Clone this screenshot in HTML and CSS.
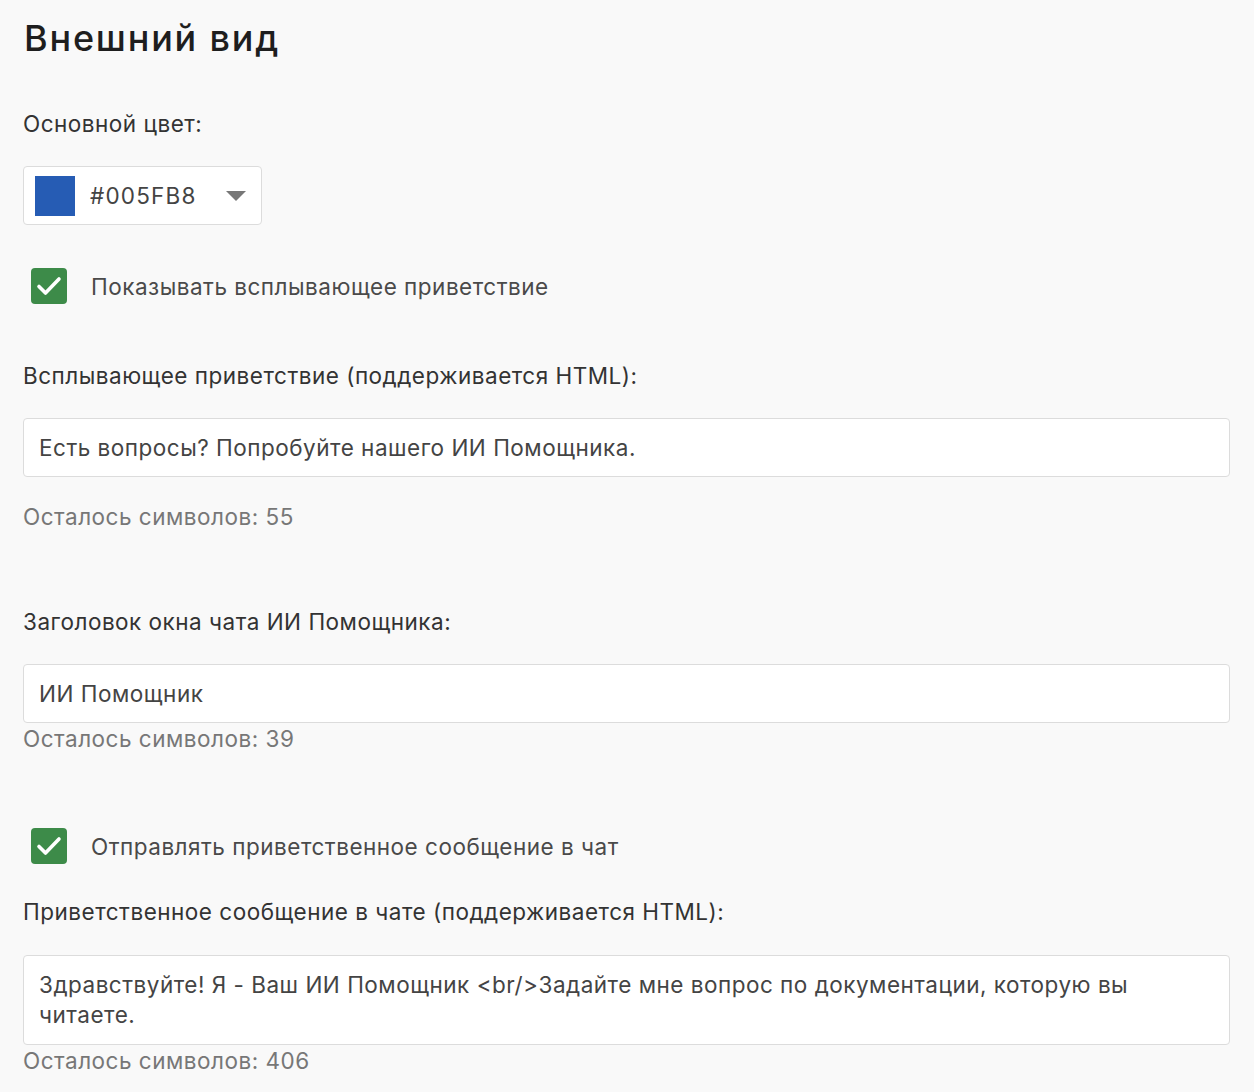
FILE: index.html
```html
<!DOCTYPE html>
<html lang="ru">
<head>
<meta charset="utf-8">
<link rel="stylesheet" href="styles.css">
</head>
<body>
<div class="page">
  <h1 class="title">Внешний вид</h1>

  <div class="label first">Основной цвет:</div>
  <div class="color-select">
    <span class="swatch"></span>
    <span class="color-text">#005FB8</span>
    <svg class="caret" width="20" height="10" viewBox="0 0 20 10"><path d="M0 0H20L10 10Z" fill="#777"/></svg>
  </div>

  <div class="check-row check1">
    <span class="checkbox"><svg width="26" height="22" viewBox="0 0 26 22"><path d="M3 11.5L9.5 18L23 4" fill="none" stroke="#fff" stroke-width="3.6" stroke-linecap="round" stroke-linejoin="round"/></svg></span>
    <span class="check-text">Показывать всплывающее приветствие</span>
  </div>

  <div class="label l2">Всплывающее приветствие (поддерживается HTML):</div>
  <div class="input">Есть вопросы? Попробуйте нашего ИИ Помощника.</div>
  <div class="hint h1">Осталось символов: 55</div>

  <div class="label l3">Заголовок окна чата ИИ Помощника:</div>
  <div class="input">ИИ Помощник</div>
  <div class="hint tight">Осталось символов: 39</div>

  <div class="check-row check2">
    <span class="checkbox"><svg width="26" height="22" viewBox="0 0 26 22"><path d="M3 11.5L9.5 18L23 4" fill="none" stroke="#fff" stroke-width="3.6" stroke-linecap="round" stroke-linejoin="round"/></svg></span>
    <span class="check-text">Отправлять приветственное сообщение в чат</span>
  </div>

  <div class="label l4">Приветственное сообщение в чате (поддерживается HTML):</div>
  <div class="input textarea">Здравствуйте! Я - Ваш ИИ Помощник &lt;br/&gt;Задайте мне вопрос по документации, которую вы читаете.</div>
  <div class="hint tight">Осталось символов: 406</div>
</div>
</body>
</html>
```

FILE: styles.css
```css
html, body {
  margin: 0;
  padding: 0;
  background: #f9f9f9;
}
body {
  font-family: Inter, "Noto Sans", sans-serif;
  color: #333;
  font-size: 22.5px;
  letter-spacing: 0.5px;
}
.page {
  padding: 0 24px 0 23px;
  display: flex;
  flex-direction: column;
}
.title {
  margin: 14px 0 0 1px;
  font-size: 36px;
  font-weight: 500;
  line-height: 48px;
  letter-spacing: 1.8px;
  color: #1e1e1e;
}
.label {
  line-height: 30px;
  color: #333;
}
.label.first { margin-top: 47px; }
.color-select {
  margin-top: 27px;
  width: 237px;
  height: 57px;
  border: 1px solid #dcdcdc;
  border-radius: 4px;
  background: #fff;
  display: flex;
  align-items: center;
}
.swatch {
  width: 40px;
  height: 40px;
  background: #265cb4;
  margin-left: 11px;
}
.color-text {
  margin-left: 15px;
  color: #444;
  letter-spacing: 1.2px;
}
.caret {
  margin-left: auto;
  margin-right: 15px;
}
.check-row {
  display: flex;
  align-items: center;
  margin-left: 8px;
}
.check1 { margin-top: 43px; }
.check2 { margin-top: 74px; }
.checkbox {
  width: 36px;
  height: 36px;
  border-radius: 4px;
  background: #3d8b49;
  display: flex;
  align-items: center;
  justify-content: center;
}
.check-text {
  margin-left: 24px;
  color: #4a4a4a;
}
.l2 { margin-top: 57px; }
.l3 { margin-top: 75px; }
.l4 { margin-top: 33px; }
.input {
  margin-top: 27px;
  height: 57px;
  border: 1px solid #dcdcdc;
  border-radius: 4px;
  background: #fff;
  padding: 0 15px;
  line-height: 57px;
  color: #444;
}
.textarea {
  margin-top: 28px;
  height: auto;
  line-height: 30px;
  padding: 14px 15px;
}
.hint {
  line-height: 30px;
  color: #777;
}
.hint.h1 { margin-top: 25px; }
.hint.tight { margin-top: 1px; }
```
